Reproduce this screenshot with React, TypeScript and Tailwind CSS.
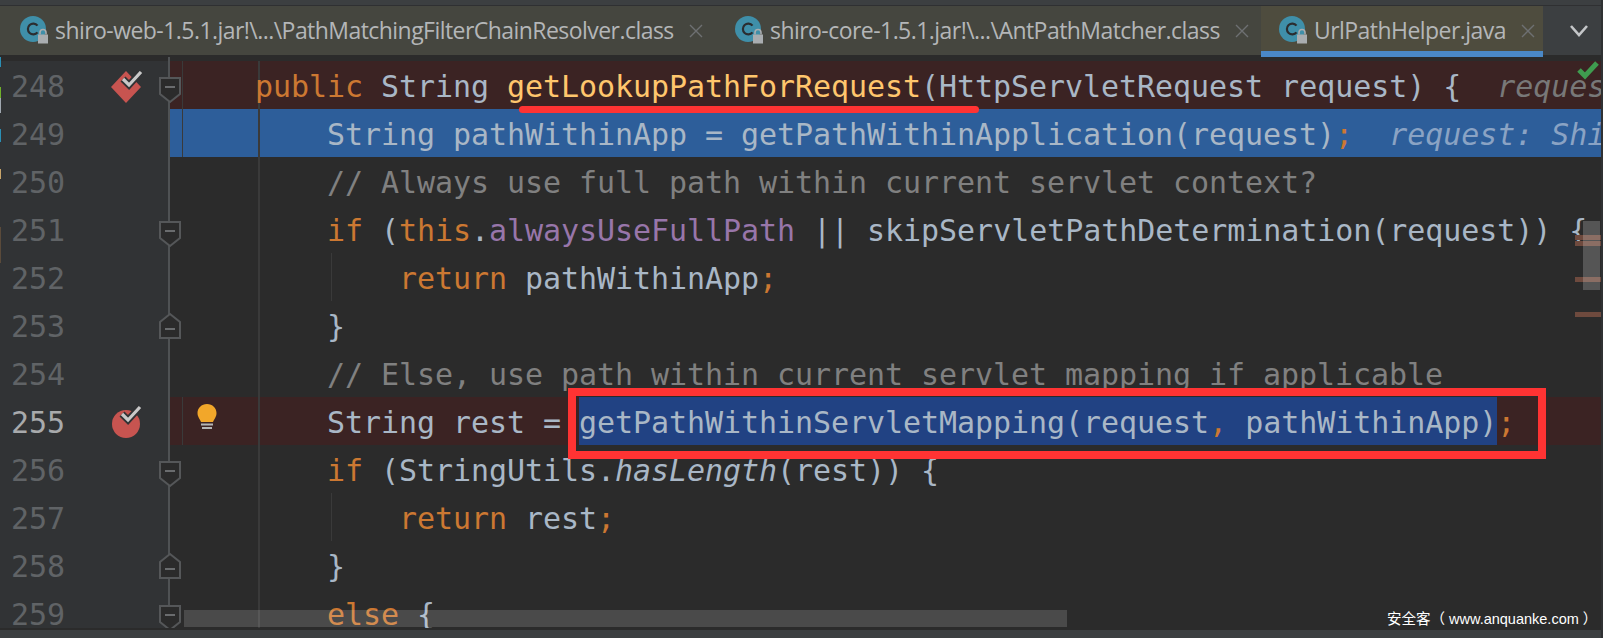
import React from "react";

type Tok = [string, string];
const K = "text-[#cc7832]";
const T = "text-[#a9b7c6]";
const F = "text-[#ffc66d]";
const P = "text-[#9876aa]";
const C = "text-[#808080]";
const H = "text-[#787878] italic";
const HB = "text-[#8aa3c4] italic";
const I = "text-[#a9b7c6] italic";

type Line = {
  n: number;
  bg?: string;
  toks: Tok[];
  fold?: "down" | "up";
  inner?: boolean;
  guide?: boolean;
  icon?: "diamond" | "circle";
  bulb?: boolean;
  current?: boolean;
};

const lines: Line[] = [
  {
    n: 248,
    bg: "bg-[#3b2323]",
    fold: "down",
    icon: "diamond",
    guide: true,
    toks: [
      ["    public ", K],
      ["String ", T],
      ["getLookupPathForRequest", F],
      ["(HttpServletRequest request) {", T],
      ["  request: ShiroHttpServletRequest", H],
    ],
  },
  {
    n: 249,
    bg: "bg-[#2d5e9a]",
    guide: true,
    toks: [
      ["        String pathWithinApp = getPathWithinApplication(request)", T],
      [";", K],
      ["  request: ShiroHttpServletRequest", HB],
    ],
  },
  { n: 250, toks: [["        // Always use full path within current servlet context?", C]] },
  {
    n: 251,
    fold: "down",
    toks: [
      ["        if ", K],
      ["(", T],
      ["this", K],
      [".", T],
      ["alwaysUseFullPath", P],
      [" || skipServletPathDetermination(request)) {", T],
    ],
  },
  {
    n: 252,
    inner: true,
    toks: [
      ["            return ", K],
      ["pathWithinApp", T],
      [";", K],
    ],
  },
  { n: 253, fold: "up", toks: [["        }", T]] },
  { n: 254, toks: [["        // Else, use path within current servlet mapping if applicable", C]] },
  { n: 255, toks: [], current: true, icon: "circle", bulb: true, bg: "bg-[#3b2323]", guide: true },
  {
    n: 256,
    fold: "down",
    toks: [
      ["        if ", K],
      ["(StringUtils.", T],
      ["hasLength", I],
      ["(rest)) {", T],
    ],
  },
  {
    n: 257,
    inner: true,
    toks: [
      ["            return ", K],
      ["rest", T],
      [";", K],
    ],
  },
  { n: 258, fold: "up", toks: [["        }", T]] },
  {
    n: 259,
    fold: "down",
    toks: [
      ["        else ", K],
      ["{", T],
    ],
  },
];

function ClassIcon() {
  return (
    <svg width="30" height="30" viewBox="0 0 30 30" className="shrink-0">
      <circle cx="13" cy="13" r="13" fill="#3f8fa9" />
      <path d="M17.5 9.600a5.400 5.400 0 1 0 0 6.800" fill="none" stroke="#2b2d30" strokeWidth="2.2" />
      <rect x="18" y="18.500" width="10" height="9" fill="#a9adb0" />
      <path d="M20 18.500v-2a3 3 0 0 1 6 0v2" fill="none" stroke="#a9adb0" strokeWidth="1.6" />
    </svg>
  );
}

function CloseIcon() {
  return (
    <svg width="14" height="14" viewBox="0 0 14 14" className="shrink-0">
      <path d="M1 1l12 12M13 1L1 13" stroke="#6e7072" strokeWidth="1.4" fill="none" />
    </svg>
  );
}

function Tab({ label, w, active }: { label: string; w: string; active?: boolean }) {
  return (
    <div className={`${w} relative flex h-full shrink-0 items-center pl-[18px] ${active ? "bg-[#4e4c3e]" : ""}`}>
      <ClassIcon />
      <span className="ml-[5px] whitespace-nowrap text-[23px] text-[#b4b6b8] font-['Open_Sans',sans-serif] tracking-[-0.55px]">
        {label}
      </span>
      <span className="ml-[15px]">
        <CloseIcon />
      </span>
      {active && <div className="absolute bottom-[-2px] left-0 right-0 h-[6px] bg-[#4a88c7]" />}
    </div>
  );
}

function Fold({ dir }: { dir: "down" | "up" }) {
  return (
    <svg
      width="24"
      height="28"
      viewBox="0 0 24 28"
      className={`shrink-0 ${dir === "down" ? "mt-[15px]" : "mt-[11px]"}`}
    >
      <path
        d={dir === "down" ? "M2 2H22V18L12 26L2 18Z" : "M2 26H22V10L12 2L2 10Z"}
        fill="#2b2b2b"
        stroke="#555759"
        strokeWidth="2"
      />
      <path d={dir === "down" ? "M7 11H17" : "M7 17H17"} stroke="#6a6c6e" strokeWidth="2" />
    </svg>
  );
}

function Check({ x, y }: { x: number; y: number }) {
  return (
    <g transform={`translate(${x} ${y})`}>
      <path d="M0 8L6 14L18 1" fill="none" stroke="#313335" strokeWidth="7" />
      <path d="M0 8L6 14L18 1" fill="none" stroke="#c9c9c9" strokeWidth="3.2" />
    </g>
  );
}

function Diamond() {
  return (
    <svg width="34" height="34" viewBox="0 0 34 34" className="mt-[10px] shrink-0">
      <path d="M16 4L31 20L16 36L1 20Z" fill="#c75450" transform="translate(0 -4)" />
      <Check x={13} y={0} />
    </svg>
  );
}

function Dot() {
  return (
    <svg width="34" height="34" viewBox="0 0 34 34" className="mt-[8px] shrink-0">
      <ellipse cx="16" cy="19" rx="14" ry="14" fill="#c75450" />
      <Check x={12} y={1} />
    </svg>
  );
}

function Bulb() {
  return (
    <svg width="22" height="28" viewBox="0 0 22 28" className="absolute left-[26px] top-[6px]">
      <path
        d="M11 1C5.500 1 1.500 5 1.500 10c0 4 2.500 6 3.500 9h12c1-3 3.500-5 3.500-9 0-5-4-9-9.500-9Z"
        fill="#f2a72a"
      />
      <path d="M5 21.500H17M6 25H16" stroke="#b5b5b5" strokeWidth="2" />
    </svg>
  );
}

function CodeRow({ line }: { line: Line }) {
  return (
    <div className="flex h-[48px] shrink-0">
      {/* gutter: number, breakpoint, fold marker */}
      <div className="relative z-10 flex h-full w-[168px] shrink-0 items-start bg-[#313335]">
        <span className={`w-[110px] shrink-0 pl-[11px] ${line.current ? "text-[#a8aaac]" : "text-[#606366]"}`}>
          {line.n}
        </span>
        <div className="flex w-[48px] shrink-0">
          {line.icon === "diamond" && <Diamond />}
          {line.icon === "circle" && <Dot />}
        </div>
        {line.fold && <Fold dir={line.fold} />}
      </div>
      <div className="h-full w-[2px] shrink-0 bg-[#4f5254]" />
      <div className={`relative h-full min-w-0 flex-1 overflow-hidden whitespace-pre pl-[13px] ${line.bg ?? ""}`}>
        {line.guide && <div className="absolute bottom-0 left-[12px] top-0 w-[1px] bg-[#3a3a3a]" />}
        <div className="absolute bottom-0 left-[88px] top-0 w-[2px] bg-[#3a3a3a]" />
        {line.inner && <div className="absolute bottom-0 left-[161px] top-0 w-[1px] bg-[#3a3a3a]" />}
        {line.bulb && <Bulb />}
        <span className="relative">
          {line.current ? (
            <>
              <span className={T}>{"        String rest = "}</span>
              <span className="inline-block h-[48px] bg-[#214283] align-top">
                <span className={T}>getPathWithinServletMapping(request</span>
                <span className={K}>,</span>
                <span className={T}> pathWithinApp)</span>
              </span>
              <span className={K}>;</span>
            </>
          ) : (
            line.toks.map(([t, c], i) => (
              <span key={i} className={c}>
                {t}
              </span>
            ))
          )}
        </span>
      </div>
    </div>
  );
}

export default function App() {
  return (
    <div className="relative flex h-[638px] w-[1603px] flex-col overflow-hidden bg-[#2b2b2b]">
      {/* window strip */}
      <div className="h-[5px] shrink-0 bg-[#3c3f41]" />
      <div className="h-[1px] shrink-0 bg-[#2f3032]" />

      {/* tab bar */}
      <div className="flex h-[49px] shrink-0 items-center bg-[#45463f] pl-[2px]">
        <Tab label="shiro-web-1.5.1.jar!\...\PathMatchingFilterChainResolver.class" w="w-[715px]" />
        <Tab label="shiro-core-1.5.1.jar!\...\AntPathMatcher.class" w="w-[544px]" />
        <Tab label="UrlPathHelper.java" w="w-[282px]" active />
        <div className="flex h-full flex-1 items-center justify-center bg-[#3c3f41] pl-[12px]">
          <svg width="20" height="14" viewBox="0 0 20 14">
            <path d="M2 2L10 11L18 2" fill="none" stroke="#c4c6c8" strokeWidth="2.600" />
          </svg>
        </div>
      </div>

      {/* gap above the first line */}
      <div className="flex h-[6px] shrink-0 pl-[168px] pt-[2px]">
        <div className="w-[2px] bg-[#4f5254]" />
      </div>

      {/* editor */}
      <div className="relative flex h-[567px] shrink-0 flex-col overflow-hidden font-['DejaVu_Sans_Mono',monospace] text-[30px] leading-[51px] tracking-[-0.06px]">
        {lines.map((l) => (
          <CodeRow key={l.n} line={l} />
        ))}

        {/* underline annotation */}
        <div className="absolute left-[519px] top-[45px] z-20 h-[7px] w-[460px] rounded-full bg-[#ff3333]" />

        {/* annotation box */}
        <div className="absolute left-[568px] top-[327px] z-20 h-[71px] w-[978px] border-[8px] border-[#ff3333]" />

        {/* error stripes */}
        <div className="absolute left-[1575px] top-[174px] z-20 flex w-[26px] flex-col">
          <div className="h-[5px] bg-[#6e4a3e]" />
          <div className="mt-[1px] h-[5px] bg-[#6e4a3e]" />
          <div className="mt-[31px] h-[5px] bg-[#6e4a3e]" />
          <div className="mt-[30px] h-[5px] bg-[#6e4a3e]" />
        </div>

        {/* scroll thumb */}
        <div className="absolute left-[1583px] top-[160px] z-20 h-[69px] w-[17px] bg-white/20" />

        {/* inspection check */}
        <svg width="24" height="20" viewBox="0 0 24 20" className="absolute left-[1576px] top-0 z-20">
          <path d="M3 9L9 15L21 2" fill="none" stroke="#3f9c4f" strokeWidth="5" />
        </svg>

        {/* horizontal scrollbar */}
        <div className="absolute left-[184px] top-[549px] z-20 h-[17px] w-[883px] bg-white/[0.15]" />

        {/* watermark */}
        <div className="absolute left-[1387px] top-[550px] z-20 whitespace-nowrap font-['Liberation_Sans','Noto_Sans_CJK_SC',sans-serif] text-[14.5px] leading-[16px] tracking-normal text-white">
          安全客（ www.anquanke.com ）
        </div>
      </div>

      {/* status strip */}
      <div className="h-[2px] shrink-0 bg-[#2b2b2b]" />
      <div className="flex-1 bg-[#3c3f41]" />

      {/* right edge */}
      <div className="absolute bottom-0 right-0 top-0 z-30 w-[2px] bg-[#2f3133]" />

      {/* change markers on the far left edge */}
      <div className="absolute left-0 top-[57px] z-30 flex w-[1px] flex-col">
        <div className="h-[10px] bg-[#2a8fb5]" />
        <div className="mt-[20px] h-[11px] bg-[#6fb02a]" />
        <div className="h-[15px] bg-[#a0a8b0]" />
        <div className="mt-[16px] h-[13px] bg-[#2a8fb5]" />
        <div className="mt-[27px] h-[10px] bg-[#c9a56a]" />
        <div className="mt-[48px] h-[36px] bg-[#5a4a3a]" />
      </div>
    </div>
  );
}
